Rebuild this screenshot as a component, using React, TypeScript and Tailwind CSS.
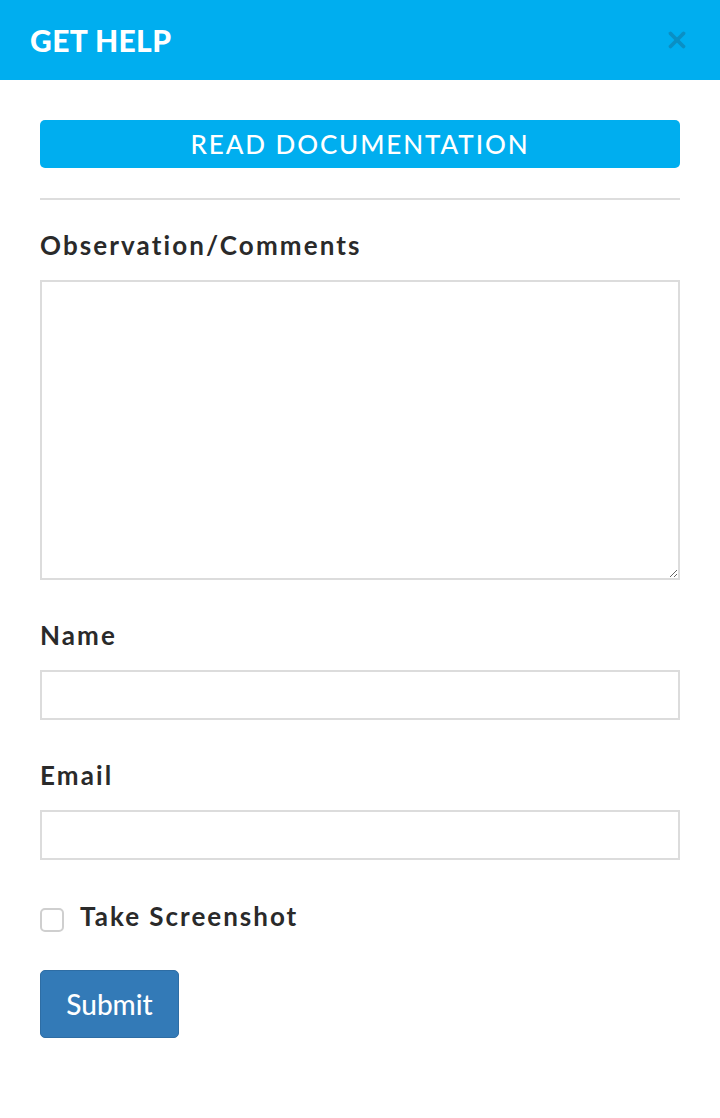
import { X } from 'lucide-react'

function Field({ label, children }: { label: string; children: React.ReactNode }) {
  return (
    <div className="flex flex-col">
      <label className="text-[26px] font-bold tracking-[2.1px] text-[#2a2a2a] leading-[30px] mb-[20px]">
        {label}
      </label>
      {children}
    </div>
  )
}

export default function App() {
  return (
    <div className="w-[720px] min-h-[1118px] bg-white font-['Lato','Liberation_Sans',sans-serif]">
      <header className="h-[80px] bg-[#00aeef] flex items-center justify-between pl-[30px] pr-[30px]">
        <h1 className="text-[30px] font-black text-white tracking-[0.4px]">GET HELP</h1>
        <X size={26} strokeWidth={3.5} className="text-[#0a8fc4]" />
      </header>

      <div className="px-[40px] pt-[40px]">
        <button className="w-full h-[48px] rounded-[5px] bg-[#00aeef] text-white text-[26px] font-medium tracking-[1.9px]">
          READ DOCUMENTATION
        </button>
        <hr className="mt-[30px] border-0 h-[2px] bg-[#dddddd]" />

        <div className="mt-[30px] flex flex-col gap-[40px]">
          <Field label="Observation/Comments">
            <textarea className="h-[300px] w-full border-2 border-[#dcdcdc] outline-none" />
          </Field>
          <Field label="Name">
            <input className="h-[50px] w-full border-2 border-[#dcdcdc] outline-none" />
          </Field>
          <Field label="Email">
            <input className="h-[50px] w-full border-2 border-[#dcdcdc] outline-none" />
          </Field>
        </div>

        <label className="mt-[40px] flex items-center gap-[16px]">
          <span className="mt-[8px] w-[24px] h-[24px] rounded-[5px] border-2 border-[#cfcfcf] bg-white" />
          <span className="text-[26px] font-bold tracking-[2px] text-[#2a2a2a] leading-[30px]">Take Screenshot</span>
        </label>

        <button className="mt-[38px] w-[139px] h-[68px] rounded-[5px] bg-[#337ab7] border border-[#2e6da4] text-white text-[28px] font-medium">
          Submit
        </button>
      </div>
    </div>
  )
}
